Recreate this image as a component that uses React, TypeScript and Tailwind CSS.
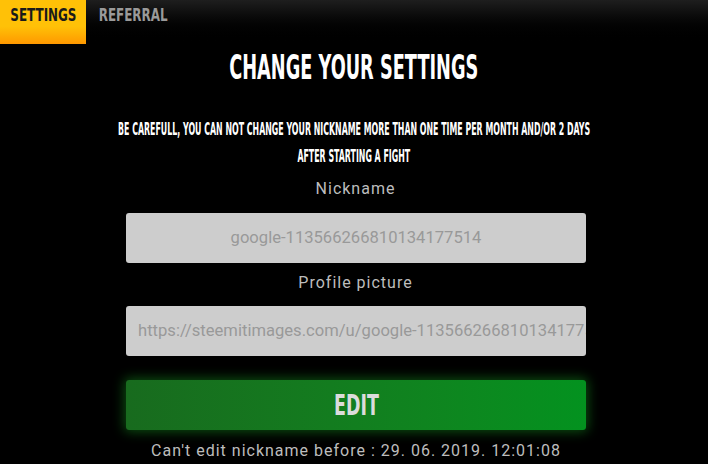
import React from 'react'

const display = "font-['DejaVu_Sans_Condensed','DejaVu_Sans',sans-serif] font-bold uppercase whitespace-nowrap inline-block"
const body = "font-['Roboto','Liberation_Sans',sans-serif]"

export default function App() {
  return (
    <div className="w-[708px] h-[464px] bg-black overflow-hidden">
      {/* tabs */}
      <div className="h-[44px] flex bg-gradient-to-b from-[#1e1e1e] to-black">
        <div className="w-[86px] h-full flex justify-center pt-[7px] bg-gradient-to-b from-[#ffc107] from-60% to-[#ff9800]">
          <span className={`${display} leading-none text-[17px] text-[#1a1a1a] scale-x-[0.78]`}>Settings</span>
        </div>
        <div className="w-[94px] h-full flex justify-center pt-[7px]">
          <span className={`${display} leading-none text-[17px] text-[#9a9a9a] scale-x-[0.78]`}>Referral</span>
        </div>
      </div>

      <div className="flex flex-col items-center">
        <h1 className={`${display} leading-none text-white text-[34px] mt-[6px] scale-x-[0.58]`}>Change your settings</h1>

        <div className="mt-[32px] flex flex-col items-center">
          <p className={`${display} text-white text-[17.5px] leading-[27px] scale-x-[0.5]`}>
            Be carefull, you can not change your nickname more than one time per month and/or 2 days
          </p>
          <p className={`${display} text-white text-[17.5px] leading-[27px] scale-x-[0.5]`}>after starting a fight</p>
        </div>

        <label className={`${body} text-[#bdbdbd] text-[16px] tracking-[1px] mt-[7px] ml-[3px]`}>Nickname</label>
        <div className={`${body} mt-[12px] ml-[4px] w-[460px] h-[50px] bg-[#cdcdcd] rounded-[3px] flex items-center justify-center text-[16.6px] text-[#999999]`}>
          google-113566266810134177514
        </div>

        <label className={`${body} text-[#bdbdbd] text-[16px] tracking-[1px] mt-[8px] ml-[3px]`}>Profile picture</label>
        <div className={`${body} mt-[11px] ml-[4px] w-[460px] h-[50px] bg-[#cdcdcd] rounded-[3px] flex items-center overflow-hidden whitespace-nowrap px-[12px] text-[16.6px] text-[#999999]`}>
          https://steemitimages.com/u/google-113566266810134177514/avatar
        </div>

        <button className="mt-[24px] ml-[4px] w-[460px] h-[50px] rounded-[3px] bg-gradient-to-r from-[#186b1e] to-[#03921f] shadow-[0_0_12px_2px_rgba(20,140,30,0.55)] flex items-center justify-center">
          <span className={`${display} leading-none text-[#dcdcdc] text-[29px] scale-x-[0.67]`}>Edit</span>
        </button>

        <p className={`${body} text-[#bdbdbd] text-[16px] tracking-[1px] mt-[9px] ml-[4px]`}>Can't edit nickname before : 29. 06. 2019. 12:01:08</p>
      </div>
    </div>
  )
}
